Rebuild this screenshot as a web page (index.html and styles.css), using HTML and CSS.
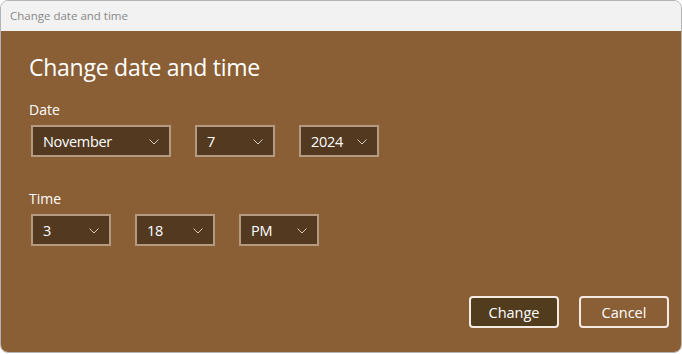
FILE: index.html
```html
<!DOCTYPE html>
<html>
<head>
<meta charset="utf-8">
<link rel="stylesheet" href="styles.css">
</head>
<body>
<div class="window">
  <div class="titlebar">Change date and time</div>
  <div class="content">
    <h1 class="heading">Change date and time</h1>
    <div class="label">Date</div>
    <div class="row">
      <div class="select wide"><span>November</span><svg class="chev" width="10" height="6" viewBox="0 0 10 6"><path d="M0.5 0.5 L5 5 L9.5 0.5" fill="none" stroke="#d8c8b8" stroke-width="1"/></svg></div>
      <div class="select"><span>7</span><svg class="chev" width="10" height="6" viewBox="0 0 10 6"><path d="M0.5 0.5 L5 5 L9.5 0.5" fill="none" stroke="#d8c8b8" stroke-width="1"/></svg></div>
      <div class="select"><span>2024</span><svg class="chev" width="10" height="6" viewBox="0 0 10 6"><path d="M0.5 0.5 L5 5 L9.5 0.5" fill="none" stroke="#d8c8b8" stroke-width="1"/></svg></div>
    </div>
    <div class="label time">Time</div>
    <div class="row">
      <div class="select"><span>3</span><svg class="chev" width="10" height="6" viewBox="0 0 10 6"><path d="M0.5 0.5 L5 5 L9.5 0.5" fill="none" stroke="#d8c8b8" stroke-width="1"/></svg></div>
      <div class="select"><span>18</span><svg class="chev" width="10" height="6" viewBox="0 0 10 6"><path d="M0.5 0.5 L5 5 L9.5 0.5" fill="none" stroke="#d8c8b8" stroke-width="1"/></svg></div>
      <div class="select"><span>PM</span><svg class="chev" width="10" height="6" viewBox="0 0 10 6"><path d="M0.5 0.5 L5 5 L9.5 0.5" fill="none" stroke="#d8c8b8" stroke-width="1"/></svg></div>
    </div>
    <div class="buttons">
      <button class="btn primary">Change</button>
      <button class="btn">Cancel</button>
    </div>
  </div>
</div>
</body>
</html>
```
FILE: styles.css
```css
html, body {
  margin: 0;
  padding: 0;
  background: #ffffff;
  width: 682px;
  height: 354px;
  overflow: hidden;
}
.window {
  box-sizing: border-box;
  width: 682px;
  height: 353px;
  border: 1px solid #b4b4b4;
  border-radius: 8px;
  overflow: hidden;
  display: flex;
  flex-direction: column;
  font-family: "Segoe UI", "Open Sans", "Noto Sans", sans-serif;
}
.titlebar {
  height: 30px;
  background: #f2f2f2;
  color: #888888;
  font-size: 11.5px;
  line-height: 30px;
  padding-left: 9px;
  flex: none;
}
.content {
  flex: 1;
  background: #8a5f36;
  padding: 18px 12px 0 28px;
  display: flex;
  flex-direction: column;
  color: #ffffff;
}
.heading {
  margin: 0;
  font-weight: 400;
  font-size: 23px;
  line-height: 36px;
  letter-spacing: -0.25px;
}
.label {
  font-size: 14px;
  line-height: 20px;
  margin-top: 15px;
}
.label.time {
  margin-top: 32px;
}
.row {
  display: flex;
  gap: 24px;
  margin-top: 5px;
  margin-left: 2px;
}
.select {
  box-sizing: border-box;
  width: 80px;
  height: 32px;
  background: #523920;
  border: 2px solid #b49a80;
  display: flex;
  align-items: center;
  justify-content: space-between;
  padding: 0 10px 0 10px;
  font-size: 14.5px;
  letter-spacing: -0.3px;
}
.select.wide {
  width: 140px;
}
.chev {
  display: block;
  margin-top: 1px;
}
.buttons {
  margin-top: auto;
  margin-bottom: 24px;
  display: flex;
  justify-content: flex-end;
  gap: 20px;
}
.btn {
  box-sizing: border-box;
  width: 90px;
  height: 32px;
  border: 2px solid #f4ece4;
  border-radius: 4px;
  background: transparent;
  color: #ffffff;
  font-family: "Segoe UI", "Open Sans", "Noto Sans", sans-serif;
  font-size: 14.5px;
  padding: 0;
}
.btn.primary {
  background: #523c1e;
}
```
